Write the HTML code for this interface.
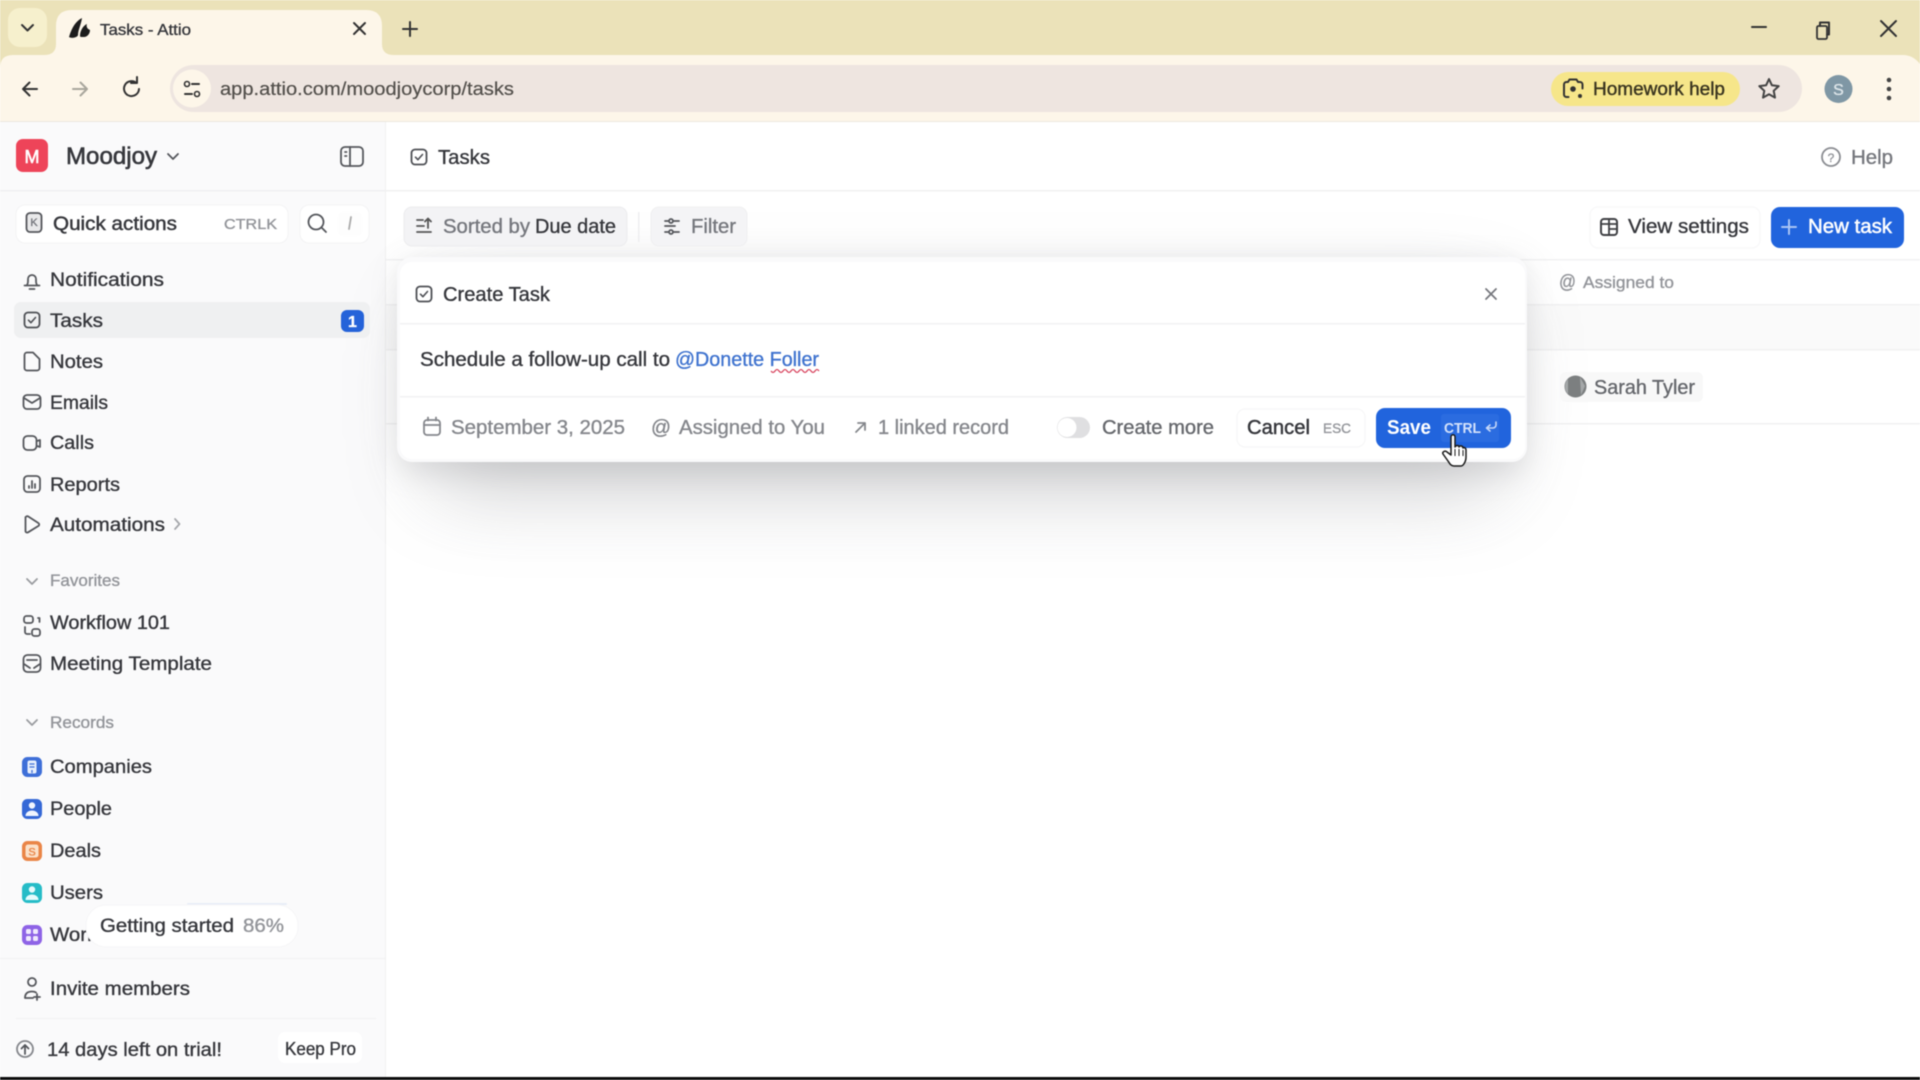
<!DOCTYPE html>
<html lang="en"><head><meta charset="utf-8"><title>Tasks - Attio</title>
<style>
html,body{margin:0;padding:0;width:1920px;height:1080px;overflow:hidden;background:#fff}
svg{display:block;filter:blur(.55px)}
text{font-family:"Liberation Sans",sans-serif;fill:#36373c;stroke:#36373c;stroke-width:.35px;white-space:pre}
.g{fill:#75777d;stroke:#75777d}
.l{fill:#93959a;stroke:#93959a}
.w{fill:#fff;stroke:#fff}
.b{fill:#3f73cf;stroke:#3f73cf}
.i{fill:none;stroke:#55575c;stroke-width:1.8;stroke-linecap:round;stroke-linejoin:round}
.c{fill:none;stroke:#333;stroke-width:2;stroke-linecap:round;stroke-linejoin:round}
</style></head><body>
<svg width="1920" height="1080" viewBox="0 0 1920 1080" xmlns="http://www.w3.org/2000/svg">
<defs>
<filter id="s1" x="-20%" y="-80%" width="140%" height="300%"><feGaussianBlur stdDeviation="42"/></filter>
<filter id="s2" x="-20%" y="-60%" width="140%" height="260%"><feGaussianBlur stdDeviation="14"/></filter>
<symbol id="chk" viewBox="0 0 18 18"><rect x="1.500" y="1.500" width="15" height="15" rx="3.500" fill="none" stroke="#4f5156" stroke-width="1.800"/><path d="M5.500 9.200l2.400 2.500 4.600-5.200" fill="none" stroke="#4f5156" stroke-width="1.600" stroke-linecap="round" stroke-linejoin="round"/></symbol>
</defs>

<!-- browser chrome -->
<rect width="1920" height="56" fill="#ebe2b9"/>
<rect y="55" width="1920" height="67" fill="#fdf6e9"/>
<path d="M0 68q0-13 13-13h1890q10 0 17 9V55H0z" fill="#ebe2b9"/>
<rect x="8" y="8" width="39" height="39" rx="12" fill="#f6f0cd"/>
<path d="M22 25l5.500 5.500 5.500-5.500" class="c" stroke-width="2.400"/>
<path d="M56 10h310q16 0 16 16v18q0 11 12 11H44q12 0 12-11V26q0-16 16-16z" fill="#fdf6e9"/>
<path d="M69 37c3-10 7-16 13-19-1 7-4 12-4 17 0 2-6 4-9 2zm11-1c0-6 4-11 7-12-1 2 0 5 3 6 0 4-3 7-6 7-3 0-4 0-4-1z" fill="#1c1c1c"/>
<text x="100" y="35" font-size="16" textLength="91" lengthAdjust="spacingAndGlyphs">Tasks - Attio</text>
<path d="M354 23l11 11M365 23l-11 11" class="c" stroke-width="2.400"/>
<path d="M410 22v14M403 29h14" class="c" stroke="#444" stroke-width="2.200"/>
<path d="M1752 27h14" class="c" stroke-width="2"/>
<rect x="1817" y="26" width="10" height="13" rx="1.500" fill="none" stroke="#333" stroke-width="1.800"/><path d="M1820 26v-3.500h9v12h-2" class="c" stroke-width="1.600"/>
<path d="M1881 21l15 15M1896 21l-15 15" class="c" stroke-width="1.500"/>

<rect x="170" y="65" width="1632" height="47" rx="23.500" fill="#eee5e0"/>
<circle cx="192" cy="88.500" r="19" fill="#fdf6e9"/>
<g transform="translate(0,1)">
<path d="M23 88h14M23 88l6.500-6.500M23 88l6.500 6.500" class="c"/>
<path d="M73 88h14M87 88l-6.500-6.500M87 88l-6.500 6.500" class="c" style="stroke:#a9a69c"/>
<path d="M139 88a7.500 7.500 0 1 1-2.500-6M137 76v6h-6" class="c"/>
<circle cx="187" cy="83" r="2.500" fill="none" stroke="#333" stroke-width="1.600"/><path d="M192 83h7M185 93h7" class="c" stroke-width="1.800"/><circle cx="197" cy="93" r="2.500" fill="none" stroke="#333" stroke-width="1.600"/>
<text x="220" y="94" font-size="18" textLength="294" lengthAdjust="spacingAndGlyphs" style="fill:#53504c;stroke:#53504c;stroke-width:.2">app.attio.com/moodjoycorp/tasks</text>
<rect x="1551" y="71" width="189" height="34" rx="17" fill="#f6e68a"/>
<path d="M1568 81h-1.500a2.500 2.500 0 0 0-2.500 2.500v10a2.500 2.500 0 0 0 2.500 2.500h2M1578 81h2a2.500 2.500 0 0 1 2.500 2.500v4M1568 81l1.500-2.500h7l1.500 2.500" class="c" stroke-width="2.200"/><circle cx="1573" cy="88" r="2.800" fill="#333"/><circle cx="1580" cy="95" r="2" fill="#333"/>
<text x="1593" y="94" font-size="18" textLength="132" lengthAdjust="spacingAndGlyphs" style="fill:#3a3520;stroke:#3a3520;stroke-width:.4">Homework help</text>
<path d="M1769 78l2.900 6.300 6.800.8-5 4.700 1.300 6.800-6-3.400-6 3.400 1.300-6.800-5-4.700 6.800-.8z" fill="none" stroke="#444" stroke-width="2" stroke-linejoin="round"/>
<circle cx="1838.500" cy="88" r="14" fill="#7f97a5"/>
<text x="1838.500" y="94" font-size="16" text-anchor="middle" style="fill:#dde5e9;stroke:#dde5e9">S</text>
<circle cx="1889" cy="79" r="2.300" fill="#444"/><circle cx="1889" cy="88" r="2.300" fill="#444"/><circle cx="1889" cy="97" r="2.300" fill="#444"/>
</g>
<rect y="121" width="1920" height="1.500" fill="#ece8df"/>

<!-- main background layer drawn first so the soft shadow can fall on the sidebar edge -->
<rect x="386" y="122" width="1534" height="958" fill="#fff"/>
<rect x="386" y="190" width="1534" height="1.500" fill="#f0f0f1"/>
<rect x="386" y="259" width="1534" height="1.500" fill="#f2f2f3"/>
<rect x="386" y="304" width="1534" height="1.500" fill="#f1f1f2"/>
<rect x="386" y="305.500" width="1534" height="44" fill="#fafafa"/>
<rect x="386" y="349" width="1534" height="1.500" fill="#f1f1f2"/>
<rect x="386" y="423" width="1534" height="1.500" fill="#f1f1f2"/>

<!-- sidebar -->
<rect y="122" width="385" height="958" fill="#fafafb"/>
<rect x="385" y="122" width="1" height="958" fill="#f0f0f1"/>

<!-- modal shadow -->
<rect x="430" y="300" width="1070" height="190" rx="30" fill="#77787d" opacity=".36" filter="url(#s1)"/>
<rect x="398" y="262" width="1128" height="212" rx="16" fill="#88898e" opacity=".2" filter="url(#s2)"/>

<rect y="190" width="385" height="1.500" fill="#f0f0f1"/>
<rect x="16" y="139" width="32" height="33" rx="7" fill="#ee4459"/>
<text x="32" y="163" font-size="18" text-anchor="middle" class="w" style="stroke-width:.6">M</text>
<text x="66" y="164" font-size="24" textLength="91" lengthAdjust="spacingAndGlyphs" style="stroke-width:.6">Moodjoy</text>
<path d="M168 154l5 5 5-5" class="i"/>
<rect x="341" y="147" width="22" height="19" rx="4" class="i"/><path d="M350 147v19M345 152h1.500M345 156h1.500" class="i"/>
<use href="#chk" x="410" y="148" width="18" height="18"/>
<text x="438" y="164" font-size="20" textLength="52" lengthAdjust="spacingAndGlyphs">Tasks</text>
<rect x="16" y="205" width="272" height="38" rx="9" fill="#fff" stroke="#f3f3f4"/>
<rect x="26.500" y="213" width="15" height="19" rx="3.500" fill="#e9e9ea" class="i" style="fill:#e9e9ea"/>
<text x="34" y="226" font-size="11" text-anchor="middle" class="g">K</text>
<text x="53" y="230" font-size="19" textLength="124" lengthAdjust="spacingAndGlyphs" style="stroke-width:.45">Quick actions</text>
<text x="224" y="229" font-size="15" textLength="53" lengthAdjust="spacingAndGlyphs" class="l">CTRLK</text>
<rect x="300" y="205" width="69" height="38" rx="9" fill="#fff" stroke="#f3f3f4"/>
<circle cx="316" cy="222" r="7.500" class="i"/><path d="M322 228l4 4" class="i"/>
<rect x="338" y="212" width="24" height="24" rx="5" fill="#fdfdfd"/>
<path d="M351 217l-2 12" class="i" style="stroke:#aaa"/>

<!-- nav -->
<g>
<rect x="14" y="302" width="356" height="36" rx="7" fill="#eff0f1"/>
<path d="M24.500 285.500h15M26.500 285.500c1.500-1.500 1.500-3 1.500-6.500a4 4 0 0 1 8 0c0 3.500 0 5 1.500 6.500M29.500 289h5" class="i"/>
<text x="50" y="286" font-size="19" textLength="114" lengthAdjust="spacingAndGlyphs">Notifications</text>
<use href="#chk" x="23" y="311" width="18" height="18"/>
<text x="50" y="327" font-size="19" textLength="53" lengthAdjust="spacingAndGlyphs">Tasks</text>
<rect x="341" y="310" width="23" height="22" rx="6" fill="#2563d9"/>
<text x="352.500" y="327" font-size="16" font-weight="700" text-anchor="middle" class="w">1</text>
<path d="M24.500 355a2.500 2.500 0 0 1 2.500-2.500H33l6.500 6.500v9a2.500 2.500 0 0 1-2.500 2.500H27a2.500 2.500 0 0 1-2.500-2.500z" class="i"/>
<text x="50" y="368" font-size="19" textLength="53" lengthAdjust="spacingAndGlyphs">Notes</text>
<rect x="23.500" y="395" width="17" height="14" rx="3.500" class="i"/><path d="M24 398l8 5 8-5" class="i"/>
<text x="50" y="409" font-size="19" textLength="58" lengthAdjust="spacingAndGlyphs">Emails</text>
<rect x="23.500" y="436" width="13" height="14" rx="4" class="i"/><path d="M37 441l3-1v7l-3-1" class="i"/>
<text x="50" y="449" font-size="19" textLength="44" lengthAdjust="spacingAndGlyphs">Calls</text>
<rect x="24" y="476" width="16" height="16" rx="3.500" class="i"/><path d="M29 486v2M32 481v7M35 484v4" class="i" stroke-width="1.300"/>
<text x="50" y="491" font-size="19" textLength="70" lengthAdjust="spacingAndGlyphs">Reports</text>
<path d="M25.500 517v14c0 1.500 1.500 2 2.800 1.200l10-6.200c1.200-.8 1.200-2.300 0-3l-10-6.500c-1.300-.8-2.800 0-2.800 1.500z" class="i"/>
<text x="50" y="531" font-size="19" textLength="115" lengthAdjust="spacingAndGlyphs">Automations</text>
<path d="M175 519l4.500 5-4.500 5" class="i" style="stroke:#a6a8ac"/>
<path d="M27 579l5 5 5-5" class="i" style="stroke:#9a9ca0"/>
<text x="50" y="586" font-size="17" textLength="70" lengthAdjust="spacingAndGlyphs" class="l">Favorites</text>
<rect x="24" y="616" width="9" height="7" rx="2.500" class="i"/><rect x="32" y="629" width="8" height="7" rx="2.500" class="i"/><path d="M38 618h1.500v4M25 627v5a2 2 0 0 0 2 2h3" class="i"/>
<text x="50" y="629" font-size="19" textLength="120" lengthAdjust="spacingAndGlyphs">Workflow 101</text>
<rect x="23.500" y="655" width="17" height="17" rx="4" class="i"/><path d="M24 664l6 4M40 664l-6 4M27 660h10" class="i"/>
<text x="50" y="670" font-size="19" textLength="162" lengthAdjust="spacingAndGlyphs">Meeting Template</text>
<path d="M27 720l5 5 5-5" class="i" style="stroke:#9a9ca0"/>
<text x="50" y="728" font-size="17" textLength="64" lengthAdjust="spacingAndGlyphs" class="l">Records</text>

<rect x="22" y="757" width="20" height="20" rx="5.500" fill="#3e6fd8"/><rect x="27.500" y="760.500" width="9" height="13" rx="2" fill="#e8effc"/><path d="M29.500 764h5M29.500 767h5M32 770v3" stroke="#3e6fd8" stroke-width="1.300"/>
<text x="50" y="773" font-size="19" textLength="102" lengthAdjust="spacingAndGlyphs">Companies</text>
<rect x="22" y="799" width="20" height="20" rx="5.500" fill="#3568d6"/><circle cx="32" cy="805.500" r="3.200" fill="#f1f5fe"/><path d="M25.500 816c0-3.500 3-5.500 6.500-5.500s6.500 2 6.500 5.500z" fill="#f1f5fe"/>
<text x="50" y="815" font-size="19" textLength="62" lengthAdjust="spacingAndGlyphs">People</text>
<rect x="22" y="841" width="20" height="20" rx="5.500" fill="#ea8547"/><rect x="25.500" y="844.500" width="13" height="13" rx="2.500" fill="#fbe1c9"/>
<text x="32" y="855.500" font-size="11" text-anchor="middle" style="fill:#ea8547;stroke:#ea8547">S</text>
<text x="50" y="857" font-size="19" textLength="51" lengthAdjust="spacingAndGlyphs">Deals</text>
<rect x="22" y="883" width="20" height="20" rx="5.500" fill="#26bcc7"/><circle cx="32" cy="889.500" r="3.200" fill="#e6fbfc"/><path d="M25.500 900c0-3.500 3-5.500 6.500-5.500s6.500 2 6.500 5.500z" fill="#e6fbfc"/>
<text x="50" y="899" font-size="19" textLength="53" lengthAdjust="spacingAndGlyphs">Users</text>
<rect x="22" y="925" width="20" height="20" rx="5.500" fill="#8e63e6"/><rect x="26" y="929" width="5" height="5" rx="1.500" fill="#f0e9fd"/><rect x="33" y="929" width="5" height="5" rx="1.500" fill="#f0e9fd"/><rect x="26" y="936" width="5" height="5" rx="1.500" fill="#f0e9fd"/><rect x="33" y="936" width="5" height="5" rx="1.500" fill="#f0e9fd"/>
<text x="50" y="941" font-size="19" textLength="112" lengthAdjust="spacingAndGlyphs">Workspaces</text>

<rect x="187" y="903" width="100" height="2" rx="1" fill="#e8edf7"/>
<rect x="187" y="945" width="55" height="2.500" rx="1" fill="#6b86c4"/>
<rect x="86" y="905" width="212" height="42" rx="20" fill="#fff" stroke="#f6f6f7"/>
<text x="100" y="932" font-size="19" textLength="134" lengthAdjust="spacingAndGlyphs">Getting started</text>
<text x="243" y="932" font-size="19" textLength="41" lengthAdjust="spacingAndGlyphs" class="l">86%</text>

<rect y="958" width="385" height="1" fill="#f1f1f2"/>
<circle cx="32" cy="982" r="4" class="i"/><path d="M25 998c0-4 2-6.500 7-6.500 1.500 0 3 .3 4 1M25 998h8M37 994v6M34 997h6" class="i"/>
<text x="50" y="995" font-size="19" textLength="140" lengthAdjust="spacingAndGlyphs">Invite members</text>
<rect x="16" y="1018" width="360" height="1" fill="#f1f1f2"/>
<circle cx="25" cy="1049" r="8" class="i" style="stroke:#85878c"/><path d="M25 1054v-9M21.500 1048.500l3.500-3.500 3.500 3.500" class="i" stroke-width="1.300"/>
<text x="47" y="1056" font-size="19.500" textLength="175" lengthAdjust="spacingAndGlyphs">14 days left on trial!</text>
<rect x="278" y="1032" width="84" height="31" rx="7" fill="#fff"/>
<text x="285" y="1055" font-size="18" textLength="71" lengthAdjust="spacingAndGlyphs">Keep Pro</text>
</g>

<!-- main header -->
<circle cx="1831" cy="157" r="9" class="i" style="stroke:#8b8d92"/><text x="1831" y="162" font-size="12" text-anchor="middle" class="l">?</text>
<text x="1851" y="164" font-size="20" textLength="42" lengthAdjust="spacingAndGlyphs" class="g">Help</text>

<text x="1559" y="288" font-size="19" class="l" textLength="17" lengthAdjust="spacingAndGlyphs">@</text>
<text x="1583" y="288" font-size="17" textLength="91" lengthAdjust="spacingAndGlyphs" class="l">Assigned to</text>
<rect x="1560" y="372" width="143" height="30" rx="6" fill="#f8f8f8"/>
<circle cx="1575.500" cy="386.500" r="11" fill="#7c7f80"/><path d="M1568 379a11 11 0 0 0 0 15zM1580 377l5 9-4 9z" fill="#a5a8a9"/>
<text x="1594" y="394" font-size="20" textLength="101" lengthAdjust="spacingAndGlyphs" class="g" style="fill:#65676c;stroke:#65676c">Sarah Tyler</text>

<!-- toolbar over shadow -->
<rect x="404" y="207" width="223" height="39" rx="8" fill="#f3f3f5" stroke="#ececee"/>
<path d="M417 220h6M417 226h7M417 232h14M428 228v-9M425 221.500l3-3 3 3" class="i" style="stroke:#555"/>
<text x="443" y="233" font-size="20" textLength="87" lengthAdjust="spacingAndGlyphs" class="g">Sorted by</text>
<text x="535" y="233" font-size="20" textLength="81" lengthAdjust="spacingAndGlyphs">Due date</text>
<rect x="638" y="212" width="1.500" height="30" fill="#eeeef0"/>
<rect x="651" y="207" width="96" height="39" rx="8" fill="#f4f4f6" stroke="#f0f0f1"/>
<path d="M665 221h3M674 221h5M665 226h10M665 232h3M674 232h5" class="i"/><circle cx="671" cy="221" r="2" class="i"/><circle cx="671" cy="232" r="2" class="i"/>
<text x="691" y="233" font-size="20" textLength="45" lengthAdjust="spacingAndGlyphs" class="g">Filter</text>
<rect x="1590" y="207" width="170" height="41" rx="8" fill="#fff" stroke="#f6f6f7"/>
<rect x="1601" y="219" width="16" height="16" rx="3" class="i" style="stroke:#3f4044;stroke-width:2"/><path d="M1601 224h16M1609 219v16M1609 229h8" class="i" style="stroke:#3f4044"/>
<text x="1628" y="233" font-size="20" textLength="121" lengthAdjust="spacingAndGlyphs">View settings</text>
<rect x="1771" y="207" width="133" height="41" rx="9" fill="#2164dd"/>
<path d="M1789 220v14M1782 227h14" stroke="#a9c4f4" stroke-width="2" stroke-linecap="round"/>
<text x="1808" y="233" font-size="20" textLength="84" lengthAdjust="spacingAndGlyphs" class="w" style="stroke-width:.5">New task</text>

<!-- modal -->
<rect x="397" y="257" width="1130" height="205" rx="15" fill="#fafafb"/>
<rect x="400" y="262" width="1125" height="197" rx="12" fill="#fff"/>
<rect x="400" y="323" width="1125" height="1.500" fill="#f2f2f3"/>
<rect x="400" y="396" width="1125" height="1.500" fill="#f2f2f3"/>
<use href="#chk" x="415" y="285" width="18" height="18"/>
<text x="443" y="301" font-size="20" textLength="107" lengthAdjust="spacingAndGlyphs">Create Task</text>
<path d="M1486 289l10 10M1496 289l-10 10" class="i" style="stroke:#77797e"/>
<text x="420" y="366" font-size="20" textLength="250" lengthAdjust="spacingAndGlyphs">Schedule a follow-up call to</text>
<text x="675" y="366" font-size="20" textLength="144" lengthAdjust="spacingAndGlyphs" class="b">@Donette Foller</text>
<path d="M771 371q2 3 4 0t4 0 4 0 4 0 4 0 4 0 4 0 4 0 4 0 4 0 4 0 4 0" fill="none" stroke="#d8455f" stroke-width="1.300"/>
<rect x="424" y="420" width="16" height="15" rx="3" class="i" style="stroke:#85878c"/><path d="M424 425h16M428 417.500v3M436 417.500v3" class="i" style="stroke:#85878c"/>
<text x="451" y="434" font-size="20" textLength="174" lengthAdjust="spacingAndGlyphs" class="l" style="fill:#85878c;stroke:#85878c">September 3, 2025</text>
<text x="651" y="434" font-size="20" textLength="20" lengthAdjust="spacingAndGlyphs" class="l" style="fill:#85878c;stroke:#85878c">@</text>
<text x="679" y="434" font-size="20" textLength="146" lengthAdjust="spacingAndGlyphs" class="l" style="fill:#85878c;stroke:#85878c">Assigned to You</text>
<path d="M856 432l9-9M858 423h7v7" class="i" style="stroke:#85878c"/>
<text x="878" y="434" font-size="20" textLength="131" lengthAdjust="spacingAndGlyphs" class="l" style="fill:#85878c;stroke:#85878c">1 linked record</text>
<rect x="1057" y="417" width="33" height="21" rx="10.500" fill="#dfdfe1"/>
<circle cx="1067" cy="427.500" r="9.500" fill="#fff"/>
<text x="1102" y="434" font-size="20" textLength="112" lengthAdjust="spacingAndGlyphs" class="g" style="fill:#66686d;stroke:#66686d">Create more</text>
<rect x="1237" y="409" width="128" height="38" rx="8" fill="#fff" stroke="#f5f5f6"/>
<text x="1247" y="434" font-size="20" textLength="63" lengthAdjust="spacingAndGlyphs" style="stroke-width:.45">Cancel</text>
<text x="1323" y="433" font-size="14" textLength="28" lengthAdjust="spacingAndGlyphs" class="l">ESC</text>
<rect x="1376" y="408" width="135" height="40" rx="9" fill="#2164dd"/>
<text x="1387" y="434" font-size="20" font-weight="700" textLength="44" lengthAdjust="spacingAndGlyphs" class="w" style="stroke-width:0">Save</text>
<rect x="1441" y="414" width="58" height="28" rx="3" fill="#2b6ce0"/>
<text x="1444" y="433" font-size="14.500" font-weight="700" textLength="37" lengthAdjust="spacingAndGlyphs" style="fill:#d4e2fb;stroke:#d4e2fb;stroke-width:0">CTRL</text>
<path d="M1496 422v3a3 3 0 0 1-3 3h-6M1490 425l-3.500 3 3.500 3" fill="none" stroke="#c7d8f8" stroke-width="1.600" stroke-linecap="round" stroke-linejoin="round"/>
<!-- cursor -->
<path d="M1451 437c0-3 4-3 4 0v10c1-2 4-2 4 0 1-2 4-1 4 1 1-1 3 0 3 2v7c0 5-3 9-5 9h-7c-3 0-4-2-6-5l-5-7c-1-2 2-4 4-2l4 3z" fill="#fff" stroke="#1a1a1a" stroke-width="1.500" stroke-linejoin="round"/>
<path d="M1455 449v7M1459 449v7M1463 450v6" stroke="#1a1a1a" stroke-width="1"/>

<rect y="1077" width="1920" height="3" fill="#0c0c0c"/>
</svg>
</body></html>
